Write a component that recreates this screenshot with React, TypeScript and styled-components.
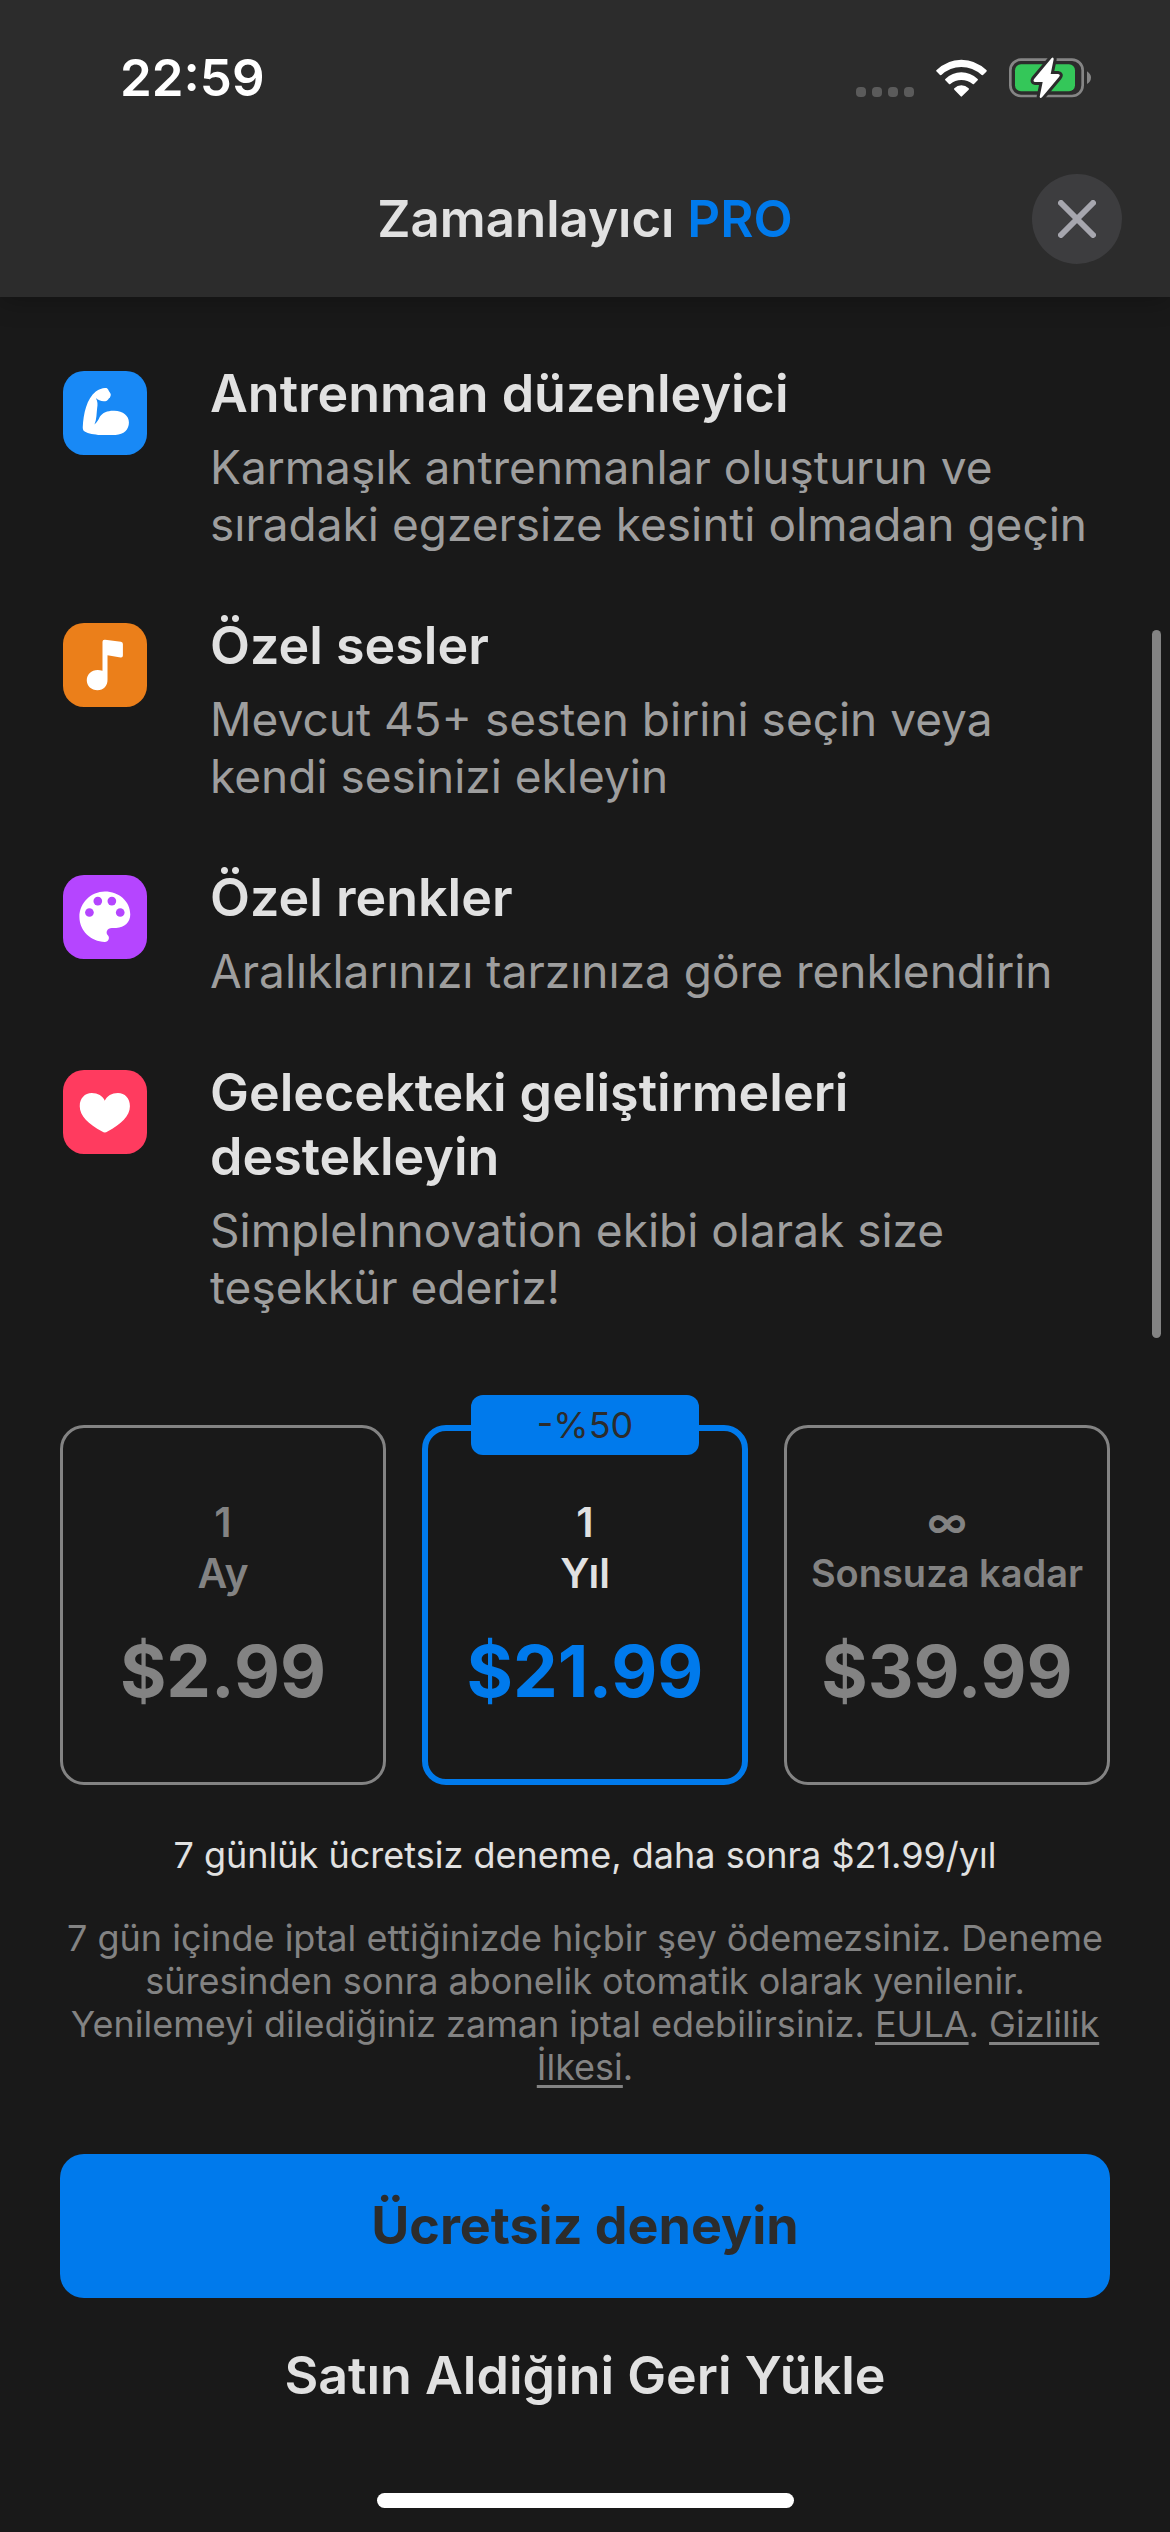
import React, { useState } from "react";
import styled, { createGlobalStyle } from "styled-components";

const color = {
  page: "#191919",
  bar: "#2c2c2c",
  text: "#e1e1e1",
  soft: "#9e9e9e",
  muted: "#838383",
  blue: "#007aec",
};

const GlobalStyle = createGlobalStyle`
  *, *::before, *::after { box-sizing: border-box; }
  body {
    margin: 0;
    background: ${color.page};
    color: ${color.text};
    font-family: Inter, "Liberation Sans", sans-serif;
  }
  h1, h2, p, ul, fieldset { margin: 0; padding: 0; border: 0; }
  button { font: inherit; border: 0; padding: 0; cursor: pointer; }
`;

const Page = styled.div`
  display: flex;
  flex-direction: column;
  min-height: 100vh;
  position: relative;
`;

const Header = styled.header`
  background: ${color.bar};
  box-shadow: 0 4px 24px rgba(0, 0, 0, 0.25);
`;

const StatusBar = styled.div`
  display: flex;
  align-items: center;
  justify-content: space-between;
  height: 141px;
  padding: 14px 78px 0 120px;
`;

const Time = styled.time`
  color: #fff;
  font-size: 51px;
  font-weight: 600;
  line-height: 64px;
`;

const StatusIcons = styled.div`
  display: flex;
  align-items: center;
  gap: 22px;
`;

const NavBar = styled.div`
  display: grid;
  grid-template-columns: 1fr auto 1fr;
  align-items: center;
  height: 156px;
  padding: 0 48px;
`;

const Title = styled.h1`
  grid-column: 2;
  font-size: 51px;
  font-weight: 600;
  line-height: 64px;
`;

const Accent = styled.span`
  color: ${color.blue};
`;

const CloseButton = styled.button`
  justify-self: end;
  display: grid;
  place-items: center;
  width: 90px;
  height: 90px;
  border-radius: 50%;
  background: #3d3d3f;
`;

const Main = styled.main`
  display: flex;
  flex-direction: column;
  flex: 1;
  padding: 65px 60px 84px;
`;

const FeatureList = styled.ul`
  display: flex;
  flex-direction: column;
  gap: 61px;
  list-style: none;
`;

const Feature = styled.li`
  display: grid;
  grid-template-columns: 84px 1fr;
  column-gap: 63px;
  padding-left: 3px;
`;

const FeatureIcon = styled.div<{ $tint: string }>`
  width: 84px;
  height: 84px;
  margin-top: 9px;
  border-radius: 21px;
  overflow: hidden;
  background: ${(p) => p.$tint};
`;

const FeatureText = styled.div`
  display: flex;
  flex-direction: column;
  gap: 13px;
`;

const FeatureTitle = styled.h2`
  font-size: 52px;
  font-weight: 600;
  line-height: 64px;
`;

const FeatureNote = styled.p`
  color: ${color.soft};
  font-size: 46px;
  line-height: 57px;
`;

const Plans = styled.fieldset`
  display: grid;
  grid-template-columns: repeat(3, minmax(0, 1fr));
  gap: 36px;
  margin-top: 109px;
`;

const Plan = styled.label<{ $on: boolean }>`
  position: relative;
  display: flex;
  flex-direction: column;
  align-items: center;
  justify-content: center;
  gap: 30px;
  min-height: 360px;
  border: ${(p) => (p.$on ? `6px solid ${color.blue}` : `3px solid ${color.muted}`)};
  border-radius: 24px;
  color: ${(p) => (p.$on ? color.text : color.muted)};
  text-align: center;
  white-space: nowrap;
  cursor: pointer;
`;

const PlanInput = styled.input`
  position: absolute;
  inset: 0;
  margin: 0;
  opacity: 0;
  cursor: pointer;
`;

const Term = styled.span`
  display: flex;
  flex-direction: column;
  font-size: 41px;
  font-weight: 600;
  line-height: 51px;
`;

const TermUnit = styled.span<{ $long?: boolean }>`
  font-size: ${(p) => (p.$long ? 38 : 41)}px;
`;

const Price = styled.span<{ $on: boolean }>`
  color: ${(p) => (p.$on ? color.blue : "inherit")};
  font-size: 71px;
  font-weight: 700;
  line-height: 84px;
`;

const Badge = styled.span`
  position: absolute;
  top: -36px;
  left: 50%;
  width: 228px;
  transform: translateX(-50%);
  border-radius: 12px;
  background: ${color.blue};
  color: ${color.bar};
  font-size: 36px;
  line-height: 60px;
`;

const TrialNote = styled.p`
  margin-top: 49px;
  font-size: 36px;
  line-height: 43px;
  text-align: center;
`;

const Legal = styled.p`
  margin-top: 40px;
  color: ${color.muted};
  font-size: 36px;
  line-height: 43px;
  text-align: center;
`;

const LegalLink = styled.a`
  color: inherit;
  text-decoration: underline;
  text-decoration-thickness: 3px;
  text-underline-offset: 5px;
`;

const PrimaryButton = styled.button`
  && {
    margin-top: 65px;
    min-height: 144px;
    border-radius: 24px;
    background: ${color.blue};
    color: ${color.bar};
    font-size: 52px;
    font-weight: 700;
    line-height: 64px;
  }
`;

const RestoreButton = styled.button`
  && {
    align-self: center;
    margin-top: 46px;
    background: none;
    color: ${color.text};
    font-size: 52px;
    font-weight: 600;
    line-height: 64px;
  }
`;

const HomeIndicator = styled.div`
  align-self: center;
  width: 417px;
  height: 15px;
  margin-bottom: 24px;
  border-radius: 8px;
  background: #fff;
`;

const ScrollThumb = styled.div`
  position: absolute;
  top: 630px;
  right: 9px;
  width: 9px;
  height: 708px;
  border-radius: 5px;
  background: #838383;
`;

const SignalDots = () => (
  <svg width="58" height="38" viewBox="0 0 58 38" fill="#5b5b5b" aria-hidden="true">
    {[0, 16, 32, 48].map((x) => (
      <rect key={x} x={x} y="28" width="10" height="10" rx="4" />
    ))}
  </svg>
);

const Wifi = () => (
  <svg width="51" height="38" viewBox="288 55 153 114" fill="#fff" aria-hidden="true">
    <path d="M289 89Q321 57 364 57T440 89Q441 91 439 93L429 103Q427 104 425 103Q398 79 364 79T304 103Q302 104 300 103L289 92Q288 90 289 89Z" />
    <path d="M316 115Q337 95 364 95T413 115Q415 117 413 119L402 130Q400 132 398 130Q383 118 364 118T331 130Q329 132 327 130L316 119Q314 117 316 115Z" />
    <path d="M343 143Q352 134 364 134T386 143Q388 145 386 147L366 167Q364 169 362 167L343 147Q341 145 343 143Z" />
  </svg>
);

const Battery = () => (
  <svg width="83" height="42" viewBox="507 50 249 126" aria-hidden="true">
    <rect x="511" y="58" width="217" height="109" rx="32" fill="none" stroke="#858585" strokeWidth="8" />
    <path d="M741 93Q753 101 753 112T741 131Z" fill="#858585" />
    <rect x="525" y="72" width="180" height="81" rx="18" fill="#34c759" />
    <path
      d="M635 53L583 115Q577 124 586 125H608L599 169Q600 176 606 171L657 110Q663 102 654 101H632L641 57Q641 49 635 53Z"
      fill="#fff"
      stroke={color.bar}
      strokeWidth="18"
      strokeLinejoin="round"
      paintOrder="stroke"
    />
  </svg>
);

const CloseIcon = () => (
  <svg width="38" height="38" viewBox="0 0 38 38" fill="none" stroke="#a6a6ae" strokeWidth="6" strokeLinecap="round" aria-hidden="true">
    <path d="M3 3L35 35M35 3L3 35" />
  </svg>
);

const Biceps = () => (
  <svg viewBox="40 34 251 251" fill="#fff" aria-hidden="true">
    <path d="M99 203C101 160 111 117 138 95C149 87 162 83 170 85C175 87 176 93 179 97C182 101 184 105 182 109L180 114C176 116 175 120 171 123C161 127 145 123 138 115C144 126 144 134 142 145C140 161 141 177 134 194C142 187 145 182 150 171C158 158 176 152 193 153C220 154 237 168 237 188C237 209 222 224 197 225H145C127 223 110 221 101 212Q99 208 99 203Z" />
  </svg>
);

const Note = () => (
  <svg viewBox="40 40 251 251" fill="#fff" aria-hidden="true">
    <path d="M158 96Q158 89 166 90L213 96Q219 97 219 103V137Q219 144 212 143L173 136V208C174 227 161 241 143 241C125 241 111 228 111 211C111 190 132 174 158 183Z" />
  </svg>
);

const Palette = () => (
  <svg viewBox="40 46 251 251" aria-hidden="true">
    <path
      fill="#fff"
      d="M165 95C124 95 89 129 89 171C89 212 123 246 165 246C176 246 181 233 174 226C166 218 172 204 186 204H199C224 204 241 186 241 164C241 124 207 95 165 95Z"
    />
    <g fill="#b545ff">
      <circle cx="119" cy="158" r="13" />
      <circle cx="144" cy="124" r="13" />
      <circle cx="186" cy="124" r="13" />
      <circle cx="211" cy="158" r="13" />
    </g>
  </svg>
);

const Heart = () => (
  <svg viewBox="40 46 251 251" fill="#fff" aria-hidden="true">
    <path d="M165 138C159 124 144 115 126 115C105 115 90 131 90 154C90 183 116 207 157 230Q165 235 173 230C214 207 240 183 240 154C240 131 225 115 204 115C186 115 171 124 165 138Z" />
  </svg>
);

const features = [
  {
    title: "Antrenman düzenleyici",
    note: "Karmaşık antrenmanlar oluşturun ve sıradaki egzersize kesinti olmadan geçin",
    tint: "#1889f6",
    Icon: Biceps,
  },
  {
    title: "Özel sesler",
    note: "Mevcut 45+ sesten birini seçin veya kendi sesinizi ekleyin",
    tint: "#eb7f1a",
    Icon: Note,
  },
  {
    title: "Özel renkler",
    note: "Aralıklarınızı tarzınıza göre renklendirin",
    tint: "#b545ff",
    Icon: Palette,
  },
  {
    title: "Gelecekteki geliştirmeleri destekleyin",
    note: "SimpleInnovation ekibi olarak size teşekkür ederiz!",
    tint: "#ff3b5f",
    Icon: Heart,
  },
];

const plans = [
  { id: "month", count: "1", unit: "Ay", price: "$2.99" },
  { id: "year", count: "1", unit: "Yıl", price: "$21.99", badge: "-%50" },
  { id: "forever", count: "∞", unit: "Sonsuza kadar", price: "$39.99", long: true },
];

export default function App() {
  const [selected, setSelected] = useState("year");

  return (
    <Page>
      <GlobalStyle />
      <Header>
        <StatusBar>
          <Time>22:59</Time>
          <StatusIcons>
            <SignalDots />
            <Wifi />
            <Battery />
          </StatusIcons>
        </StatusBar>
        <NavBar>
          <Title>
            Zamanlayıcı <Accent>PRO</Accent>
          </Title>
          <CloseButton type="button" aria-label="Kapat">
            <CloseIcon />
          </CloseButton>
        </NavBar>
      </Header>

      <Main>
        <FeatureList>
          {features.map(({ title, note, tint, Icon }) => (
            <Feature key={title}>
              <FeatureIcon $tint={tint}>
                <Icon />
              </FeatureIcon>
              <FeatureText>
                <FeatureTitle>{title}</FeatureTitle>
                <FeatureNote>{note}</FeatureNote>
              </FeatureText>
            </Feature>
          ))}
        </FeatureList>

        <Plans>
          {plans.map((plan) => {
            const on = plan.id === selected;
            return (
              <Plan key={plan.id} $on={on}>
                <PlanInput type="radio" name="plan" value={plan.id} checked={on} onChange={() => setSelected(plan.id)} />
                {plan.badge && <Badge>{plan.badge}</Badge>}
                <Term>
                  <span>{plan.count}</span>
                  <TermUnit $long={plan.long}>{plan.unit}</TermUnit>
                </Term>
                <Price $on={on}>{plan.price}</Price>
              </Plan>
            );
          })}
        </Plans>

        <TrialNote>7 günlük ücretsiz deneme, daha sonra $21.99/yıl</TrialNote>
        <Legal>
          7 gün içinde iptal ettiğinizde hiçbir şey ödemezsiniz. Deneme süresinden sonra abonelik otomatik olarak
          yenilenir. Yenilemeyi dilediğiniz zaman iptal edebilirsiniz. <LegalLink href="#eula">EULA</LegalLink>.{" "}
          <LegalLink href="#privacy">Gizlilik İlkesi</LegalLink>.
        </Legal>
        <PrimaryButton type="button">Ücretsiz deneyin</PrimaryButton>
        <RestoreButton type="button">Satın Aldiğini Geri Yükle</RestoreButton>
      </Main>

      <HomeIndicator />
      <ScrollThumb />
    </Page>
  );
}
